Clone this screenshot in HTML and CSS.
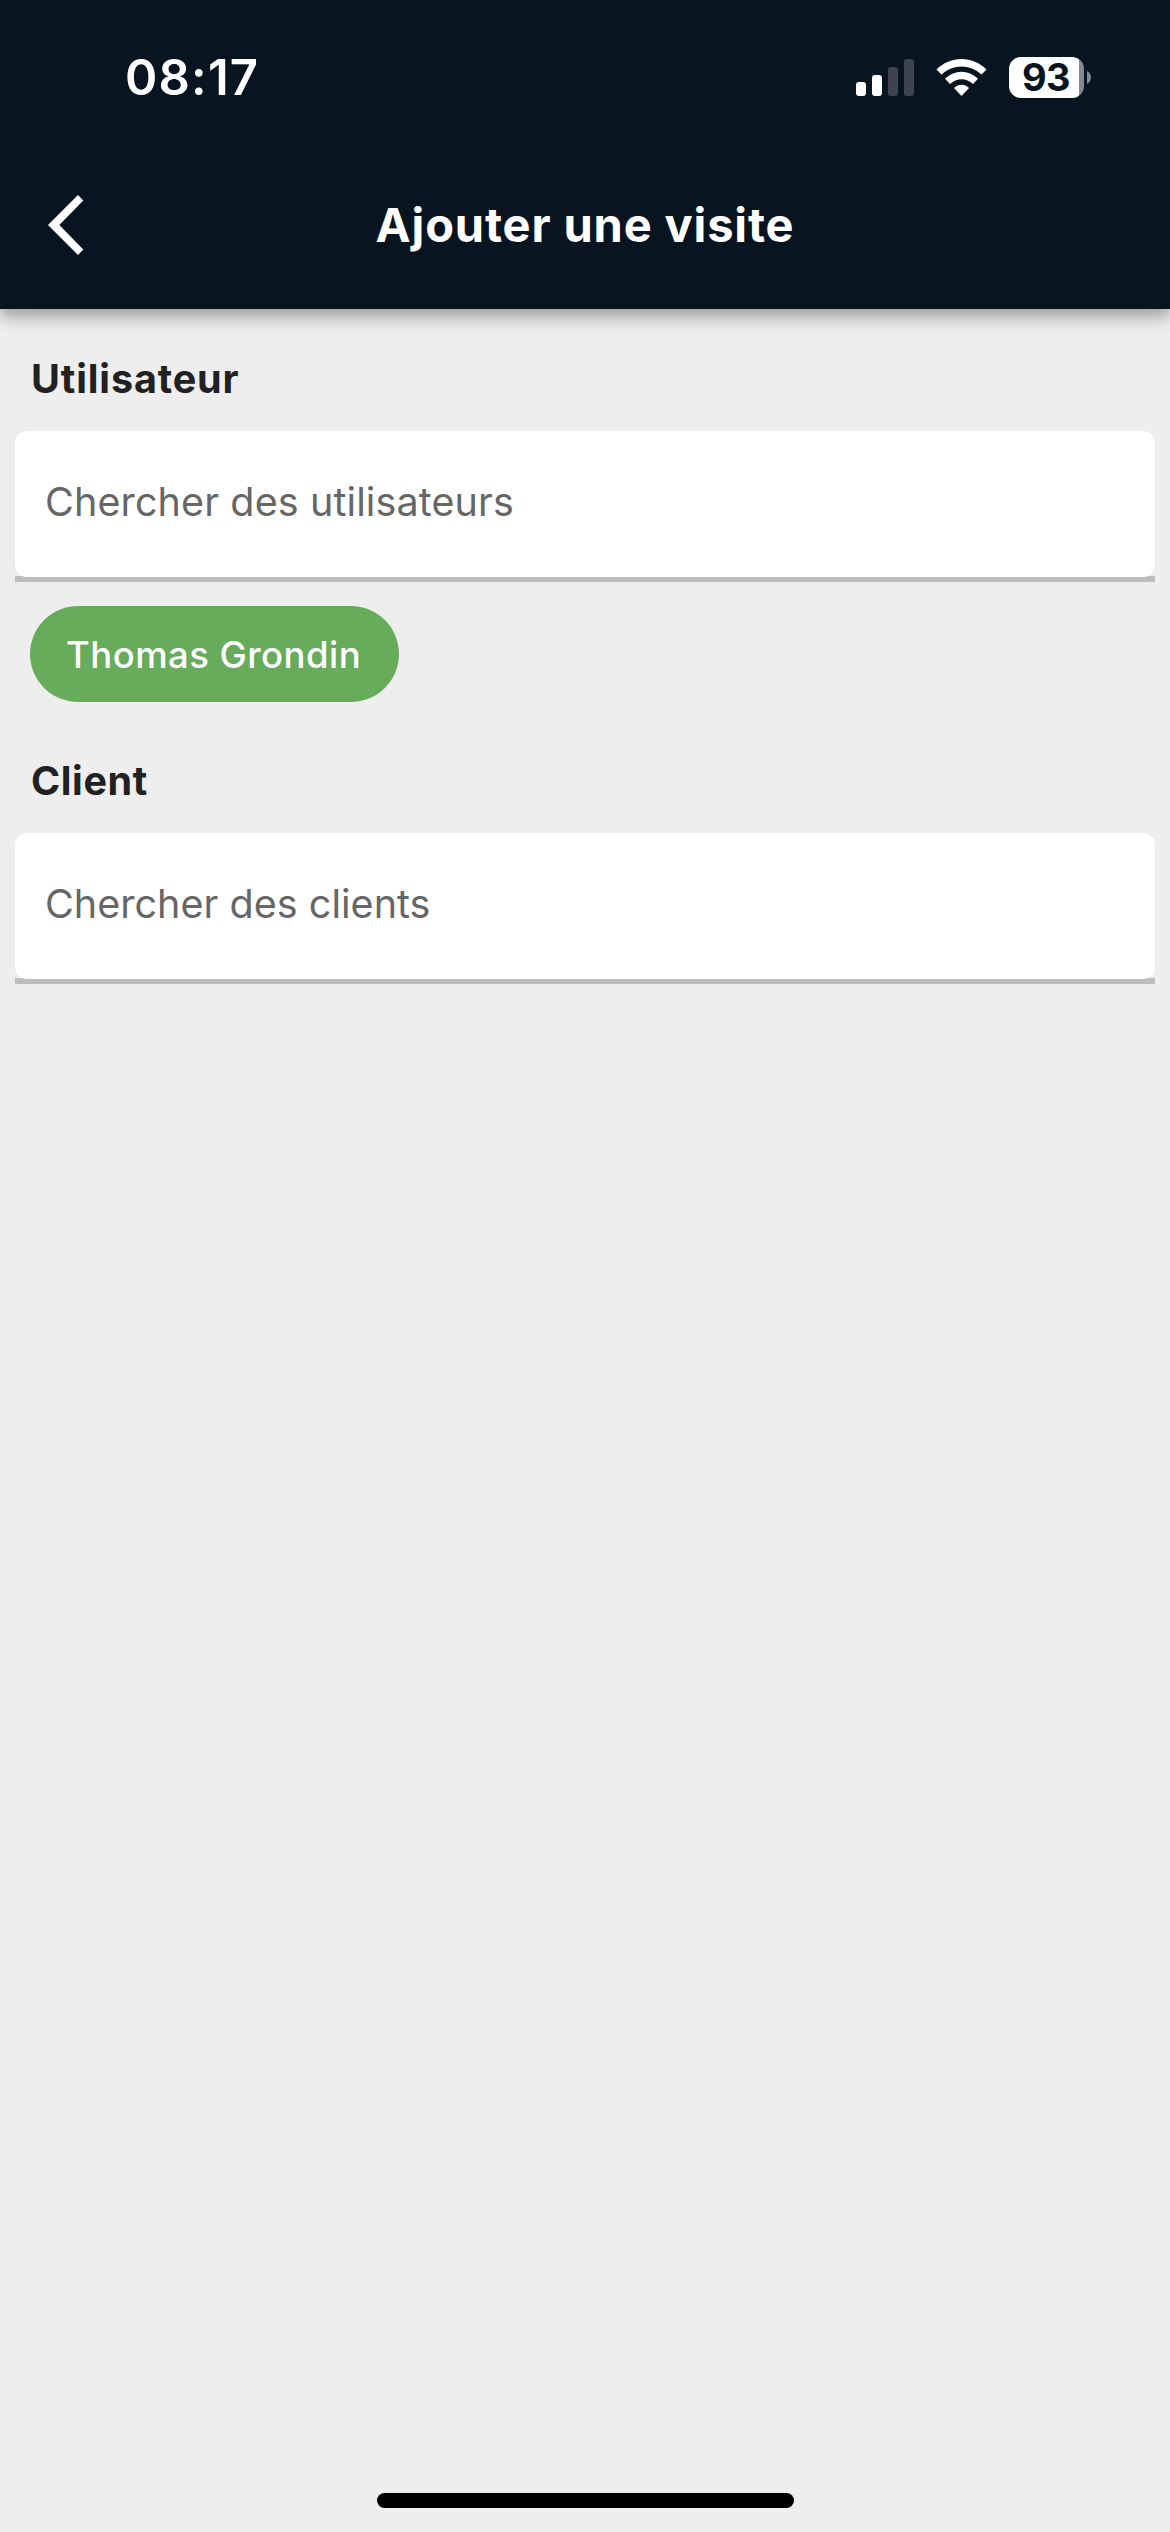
FILE: index.html
```html
<!DOCTYPE html>
<html lang="fr">
<head>
    <meta charset="UTF-8">
    <meta name="viewport" content="width=device-width, initial-scale=1.0">
    <title>Ajouter une visite</title>
    <link rel="stylesheet" href="styles.css">
</head>
<body>
    <header class="header">
        <div class="status-bar">
            <span class="time">08:17</span>
            <div class="status-icons">
                <svg class="signal" width="58" height="37" viewBox="0 0 58 37">
                    <rect x="0" y="23" width="10" height="14" rx="3" fill="#fff"/>
                    <rect x="16" y="16" width="10" height="21" rx="3" fill="#fff"/>
                    <rect x="32" y="8" width="10" height="29" rx="3" fill="#3d444f"/>
                    <rect x="48" y="0" width="10" height="37" rx="3" fill="#3d444f"/>
                </svg>
                <svg class="wifi" width="51" height="37" viewBox="0 0 51 37" fill="#fff">
                    <path d="M0.5 10.5C14.5 -3.5 36.5 -3.5 50.5 10.5L45.5 15.5C34 4.7 17 4.7 5.5 15.5Z"/>
                    <path d="M9 19.7C18.5 10.5 32.5 10.5 42 19.7L37 25C30.5 18.5 20.5 18.5 14 25Z"/>
                    <path d="M18 29C22 24.5 29 24.5 33 29L25.5 37Z"/>
                </svg>
                <div class="battery">
                    <span class="battery-level">93</span>
                </div>
                <svg class="battery-cap" width="4" height="13" viewBox="0 0 4 13">
                    <path d="M0 0C5.3 2.4 5.3 10.6 0 13Z" fill="#838990"/>
                </svg>
            </div>
        </div>
        <div class="toolbar">
            <button class="back-button" aria-label="Retour">
                <svg width="36" height="62" viewBox="0 0 36 62">
                    <path d="M0 31L30 1L35.3 6.5L11.3 31L35.3 55.5L30 61Z" fill="#fff"/>
                </svg>
            </button>
            <h1>Ajouter une visite</h1>
        </div>
    </header>

    <main class="content">
        <section class="form-group">
            <h2>Utilisateur</h2>
            <div class="search-field">
                <div class="search-input">Chercher des utilisateurs</div>
            </div>
            <div class="chips">
                <span class="chip">Thomas Grondin</span>
            </div>
        </section>

        <section class="form-group">
            <h2 class="client">Client</h2>
            <div class="search-field">
                <div class="search-input clients">Chercher des clients</div>
            </div>
        </section>
    </main>

    <div class="home-indicator"></div>
</body>
</html>
```
FILE: styles.css
```css
* {
    box-sizing: border-box;
}

body {
    font-family: Inter, "Liberation Sans", sans-serif;
    background: #eeeeee;
    margin: 0;
    height: 2532px;
    display: flex;
    flex-direction: column;
    align-items: stretch;
}

.header {
    background: #081420;
    color: white;
    height: 309px;
    box-shadow: 0 6px 12px rgba(0, 0, 0, 0.2), 0 12px 15px rgba(0, 0, 0, 0.1), 0 3px 30px rgba(0, 0, 0, 0.08);
}

.status-bar {
    height: 141px;
    padding: 14px 79px 0 125px;
    display: flex;
    justify-content: space-between;
    align-items: center;
}

.time {
    font-size: 49px;
    font-weight: 600;
    letter-spacing: 1.2px;
}

.status-icons {
    display: flex;
    align-items: center;
}

.wifi {
    margin-left: 22px;
}

.battery {
    width: 75px;
    height: 41px;
    margin: 0 3px 0 22px;
    border-radius: 12px;
    background: linear-gradient(to right, white 70px, #838990 70px);
    color: #081420;
}

.battery-level {
    display: block;
    padding-left: 13px;
    font-size: 38px;
    font-weight: 700;
    line-height: 41px;
    letter-spacing: -0.7px;
}

.toolbar {
    height: 168px;
    display: grid;
    grid-template-columns: 130px 1fr 130px;
    align-items: center;
}

.back-button {
    display: flex;
    padding: 0 0 0 48px;
    border: none;
    background: none;
}

h1 {
    margin: 0;
    padding-bottom: 2px;
    font-size: 47px;
    font-weight: 700;
    letter-spacing: 0.86px;
    text-align: center;
}

.content {
    flex: 1;
    padding: 45px 15px 0;
}

.form-group {
    margin-bottom: 54px;
}

h2 {
    margin: 0 0 27px;
    padding-left: 16px;
    color: #212121;
    font-size: 39.5px;
    font-weight: 700;
    line-height: 50px;
    letter-spacing: 0.88px;
}

h2.client {
    letter-spacing: 0.6px;
}

.search-field {
    background: linear-gradient(#eeeeee 145px, #bdbdbd 145px);
    height: 151px;
}

.search-input {
    height: 146px;
    padding-left: 30px;
    border-radius: 12px;
    background: white;
    color: #666666;
    font-size: 39.5px;
    line-height: 142px;
    letter-spacing: 0.11px;
}

.search-input.clients {
    letter-spacing: 0.02px;
}

.chips {
    display: flex;
    padding: 24px 15px 0;
}

.chip {
    height: 96px;
    padding: 0 38px 0 36px;
    border-radius: 48px;
    background: #67ac5b;
    color: white;
    font-size: 36.5px;
    font-weight: 500;
    line-height: 98px;
    letter-spacing: 0.45px;
}

.home-indicator {
    width: 417px;
    height: 15px;
    margin: 0 auto 24px;
    border-radius: 8px;
    background: black;
}
```
